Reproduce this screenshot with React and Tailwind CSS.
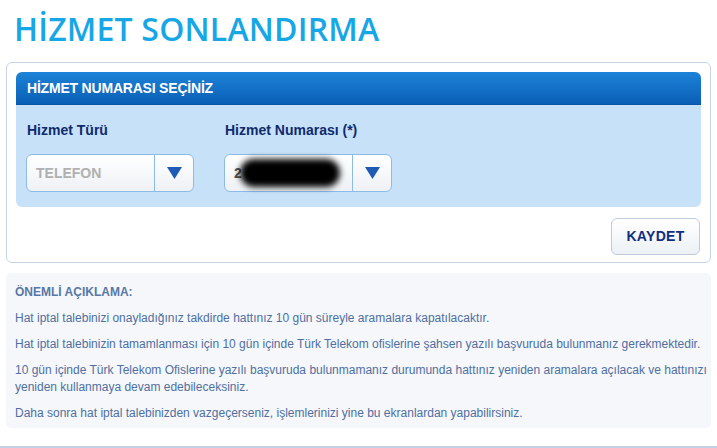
import React from "react";

function Triangle() {
  return (
    <svg width="15" height="12" viewBox="0 0 15 12">
      <path d="M0 0 H15 L7.5 12 Z" fill="#1f5bb5" />
    </svg>
  );
}

function SelectBox({ children }) {
  return (
    <div className="relative flex h-[38px] w-[168px] rounded-[6px] border border-[#8dbbe8] bg-gradient-to-b from-white to-[#eef1f5] overflow-hidden">
      <div className="flex flex-1 items-center pl-[9px] border-r border-[#8dbbe8]">{children}</div>
      <div className="flex w-[38px] items-center justify-center">
        <Triangle />
      </div>
    </div>
  );
}

export default function App() {
  const sans = { fontFamily: '"Liberation Sans", Arial, sans-serif' };
  return (
    <div className="relative w-[717px] h-[448px] bg-white overflow-hidden" style={sans}>
      <h1
        className="pl-[14px] pt-[11px] text-[32px] leading-[36px] font-semibold text-[#17a6e6] tracking-[0.2px]"
        style={{ fontFamily: '"Open Sans", sans-serif' }}
      >
        HİZMET SONLANDIRMA
      </h1>

      <div className="mx-[6px] mt-[15px] rounded-[6px] border border-[#c8d4e3] bg-white px-[9px] pt-[9px] pb-[7px]">
        <div className="rounded-[6px] overflow-hidden">
          <div className="h-[33px] flex items-center pl-[11px] bg-gradient-to-b from-[#1d83d8] to-[#0a5fb5] border-b border-[#0b56a3]">
            <span className="text-white font-bold text-[14px] tracking-[-0.2px]">HİZMET NUMARASI SEÇİNİZ</span>
          </div>
          <div className="bg-[#c7e1f8] pl-[10px] pt-[17px] pb-[15px] flex gap-[30px]">
            <div className="flex flex-col">
              <div className="pl-[1px] text-[14px] leading-[16px] font-bold text-[#0e2b6c]">Hizmet Türü</div>
              <div className="mt-[16px]">
                <SelectBox>
                  <span className="text-[14px] font-bold text-[#b0b0b0]">TELEFON</span>
                </SelectBox>
              </div>
            </div>
            <div className="flex flex-col">
              <div className="pl-[1px] text-[14px] leading-[16px] font-bold text-[#0e2b6c]">Hizmet Numarası (*)</div>
              <div className="mt-[16px] relative">
                <SelectBox>
                  <span className="text-[14px] font-bold text-[#555]">2</span>
                </SelectBox>
                <div className="absolute left-[16px] top-[5px] h-[28px] w-[100px] rounded-full bg-black blur-[3px]" />
              </div>
            </div>
          </div>
        </div>
        <div className="flex justify-end mt-[11px] pr-[1px]">
          <div className="flex h-[37px] w-[89px] items-center justify-center rounded-[6px] border border-[#bccbdd] bg-gradient-to-b from-white to-[#edf1f5]">
            <span className="text-[14px] font-bold text-[#112e82] tracking-[0.3px]">KAYDET</span>
          </div>
        </div>
      </div>

      <div className="mx-[6px] mt-[10px] h-[155px] rounded-[5px] bg-[#f5f7fa] pl-[9px] pr-[4px] pt-[11px] text-[12px] leading-[17px] text-[#4f6fa1] whitespace-nowrap">
        <p className="font-bold text-[#5877a6]">ÖNEMLİ AÇIKLAMA:</p>
        <p className="mt-[9px]">Hat iptal talebinizi onayladığınız takdirde hattınız 10 gün süreyle aramalara kapatılacaktır.</p>
        <p className="mt-[9px]">Hat iptal talebinizin tamamlanması için 10 gün içinde Türk Telekom ofislerine şahsen yazılı başvuruda bulunmanız gerekmektedir.</p>
        <p className="mt-[9px]">
          10 gün içinde Türk Telekom Ofislerine yazılı başvuruda bulunmamanız durumunda hattınız yeniden aramalara açılacak ve hattınızı
          <br />
          yeniden kullanmaya devam edebileceksiniz.
        </p>
        <p className="mt-[9px]">Daha sonra hat iptal talebinizden vazgeçerseniz, işlemlerinizi yine bu ekranlardan yapabilirsiniz.</p>
      </div>

      <div className="absolute left-0 right-0 bottom-0 h-[2px] bg-[#c3cfe3]" />
    </div>
  );
}
